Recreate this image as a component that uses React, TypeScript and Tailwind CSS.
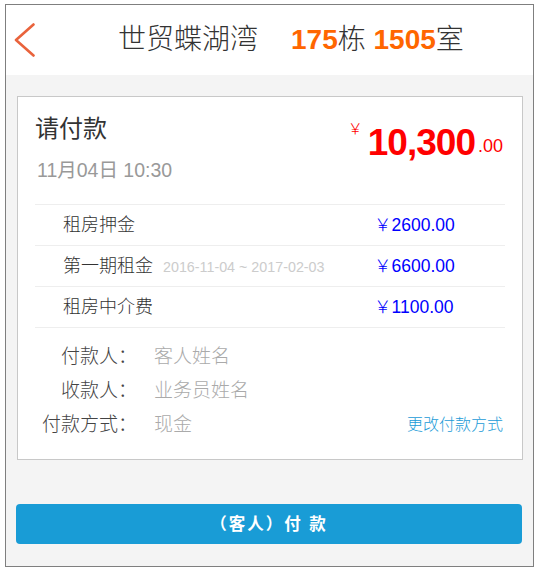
import React from "react";

const FONT = '"Liberation Sans", "Noto Sans CJK SC", sans-serif';

const rows = [
  { label: "租房押金", note: "", amount: "2600.00" },
  { label: "第一期租金", note: "2016-11-04 ~ 2017-02-03", amount: "6600.00" },
  { label: "租房中介费", note: "", amount: "1100.00" },
];

export default function App() {
  return (
    <div className="w-[542px] h-[573px] bg-white pt-[4px] pl-[5px]" style={{ fontFamily: FONT }}>
      <div className="w-[529px] border border-[#7f7f7f] bg-[#f4f4f4] flex flex-col">
        {/* header */}
        <div className="h-[70px] bg-white flex items-center pl-[8px]">
          <svg width="21" height="34" viewBox="0 0 21 34" className="shrink-0">
            <polyline points="19.5,1.5 2,17 19.5,32.5" fill="none" stroke="#e9633c" strokeWidth="2.6" strokeLinecap="round" strokeLinejoin="round" />
          </svg>
          <div className="ml-[83px] text-[28px] leading-[34px] text-[#333] whitespace-nowrap font-light">
            <span>世贸蝶湖湾</span>
            <span className="ml-[33px] font-bold text-[#ff6600]">175</span>
            <span>栋 </span>
            <span className="font-bold text-[#ff6600]">1505</span>
            <span>室</span>
          </div>
        </div>

        {/* card */}
        <div className="mt-[21px] ml-[11px] mr-[10px] bg-white border border-[#c8c8c8] px-[17px] pb-[17px]">
          <div className="h-[107px] pt-[18px] flex justify-between">
            <div className="flex flex-col">
              <div className="text-[24px] leading-[28px] text-[#333]">请付款</div>
              <div className="mt-[15px] ml-[2px] text-[19.5px] leading-[24px] text-[#999]">11月04日 10:30</div>
            </div>
            <div className="flex items-start pr-[2px]">
              <span className="mt-[5px] text-[15px] leading-[18px] text-[#ff0000] font-light">￥</span>
              <div className="ml-[5px] mt-[8px] flex items-baseline text-[#ff0000] font-bold">
                <span className="text-[37px] leading-[40px] tracking-[-1px]">10,300</span>
                <span className="ml-[3px] text-[18px] leading-[20px] font-normal relative -top-[3px]">.00</span>
              </div>
            </div>
          </div>

          <div className="border-t border-[#eeeeee]">
            {rows.map((r) => (
              <div key={r.label} className="h-[41px] border-b border-[#eeeeee] flex items-center pl-[28px]">
                <div className="flex-1 flex items-baseline">
                  <span className="text-[18px] text-[#333] font-light">{r.label}</span>
                  {r.note && <span className="ml-[10px] text-[14.3px] text-[#cccccc]">{r.note}</span>}
                </div>
                <div className="w-[131px] text-[17.5px] text-[#0000ff]">
                  <span className="font-light">￥</span>
                  <span>{r.amount}</span>
                </div>
              </div>
            ))}
          </div>

          <div className="mt-[12px] flex flex-col text-[19px] leading-[34px] font-light">
            <div className="flex">
              <div className="w-[102px] text-right text-[#444]">付款人：</div>
              <div className="ml-[17px] text-[#aaa]">客人姓名</div>
            </div>
            <div className="flex">
              <div className="w-[102px] text-right text-[#444]">收款人：</div>
              <div className="ml-[17px] text-[#aaa]">业务员姓名</div>
            </div>
            <div className="flex items-center">
              <div className="w-[102px] text-right text-[#444]">付款方式：</div>
              <div className="ml-[17px] text-[#aaa]">现金</div>
              <div className="ml-auto text-[16px] text-[#1a9bd7] pr-[2px]">更改付款方式</div>
            </div>
          </div>
        </div>

        {/* button */}
        <div className="mt-[44px] mb-[22px] ml-[10px] mr-[11px] h-[40px] rounded-[4px] bg-[#199cd6] flex items-center justify-center">
          <span className="text-white font-bold text-[16.5px] tracking-[2px]">（客人）付 款</span>
        </div>
      </div>
    </div>
  );
}
